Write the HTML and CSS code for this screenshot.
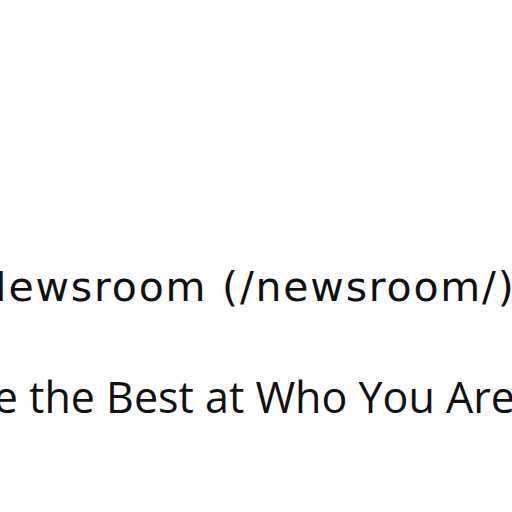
FILE: index.html
```html
<!DOCTYPE html>
<html>
<head>
<meta charset="utf-8">
<link rel="stylesheet" href="styles.css">
</head>
<body>
<div class="page">
  <div class="newsroom">Newsroom (/newsroom/)</div>
  <div class="tagline">Be the Best at Who You Are</div>
</div>
</body>
</html>
```
FILE: styles.css
```css
html, body {
  margin: 0;
  padding: 0;
  background: #ffffff;
  overflow: hidden;
}
.page {
  width: 512px;
  height: 512px;
  overflow: hidden;
  padding-top: 262px;
  box-sizing: border-box;
}
.newsroom {
  font-family: "DejaVu Sans", sans-serif;
  font-size: 41px;
  line-height: 50px;
  color: #111111;
  white-space: nowrap;
  margin-left: -24px;
  letter-spacing: 1.8px;
}
.tagline {
  font-family: "Open Sans", sans-serif;
  font-size: 43px;
  line-height: 50px;
  color: #111111;
  white-space: nowrap;
  margin-left: -34px;
  margin-top: 60px;
}
```
